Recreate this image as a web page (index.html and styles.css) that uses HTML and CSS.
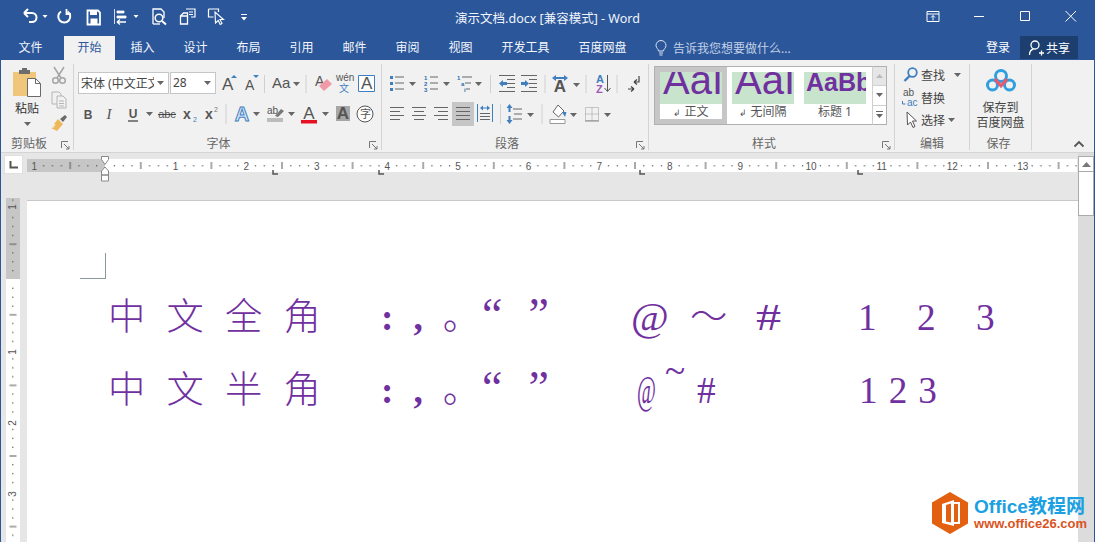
FILE: index.html
```html
<!DOCTYPE html>
<html lang="zh-CN">
<head>
<meta charset="utf-8">
<title>演示文档.docx [兼容模式] - Word</title>
<link rel="stylesheet" href="styles.css">
</head>
<body>
<div class="app">
  <header class="titlebar">
    <div class="qat">
      <svg width="18" height="24" viewBox="0 0 18 24"><path d="M3 9l4-4M3 9l4 4M3 9h8a4.5 4.5 0 0 1 0 9H8" fill="none" stroke="#fff" stroke-width="2"/></svg>
      <svg width="12" height="24" viewBox="0 0 12 24"><path d="M3.5 11h5L6 14z" fill="#fff"/></svg>
      <svg width="25" height="24" viewBox="0 0 25 24"><path d="M10 7.5a6 6 0 1 0 6.5 0" fill="none" stroke="#fff" stroke-width="2"/><path d="M15.5 5v5h4.5" fill="none" stroke="#fff" stroke-width="1.8"/></svg>
      <svg width="32" height="24" viewBox="0 0 32 24"><path d="M11.5 6.5h10.500l2 2v12h-12.500z" fill="none" stroke="#fff" stroke-width="1.800"/><path d="M14 7v4h7V7z" fill="#fff"/><path d="M14.500 20v-5.500h7V20z" fill="#fff"/></svg>
      <svg width="22" height="24" viewBox="0 0 22 24"><path d="M6.500 5v15M9 7h7v2H9zM9 12h9v2H9z" fill="#fff" stroke="#fff" stroke-width=".8"/><path d="M9 18h9M9 18l3-2.500M9 18l3 2.500" fill="none" stroke="#fff" stroke-width="1.300"/></svg>
      <svg width="12" height="24" viewBox="0 0 12 24"><path d="M3.500 11h5L6 14z" fill="#fff"/></svg>
      <svg width="30" height="24" viewBox="0 0 30 24"><path d="M11 20V5h8l3 3v6" fill="none" stroke="#fff" stroke-width="1.300"/><path d="M11 20h7" stroke="#fff" stroke-width="1.300"/><circle cx="17" cy="14" r="3.800" fill="none" stroke="#fff" stroke-width="1.500"/><path d="M20 17l4 3.500" stroke="#fff" stroke-width="2"/></svg>
      <svg width="28" height="24" viewBox="0 0 28 24"><path d="M14 5h9v8h-4M17 8h4M17 10.500h4" fill="none" stroke="#fff" stroke-width="1.200"/><path d="M8.500 20v-8h7v8zM8.500 12l3-3h4v3" fill="none" stroke="#fff" stroke-width="1.300"/></svg>
      <svg width="32" height="24" viewBox="0 0 32 24"><path d="M8.500 5h10v3M8.500 5v8h5" fill="none" stroke="#fff" stroke-width="1.200"/><path d="M15 8l.5 11 2.700-2.500 2 4 1.800-1-2-4h3.500z" fill="#2b579a" stroke="#fff" stroke-width="1.100"/></svg>
      <svg width="24" height="24" viewBox="0 0 24 24"><path d="M9 10.500h6" stroke="#fff"/><path d="M9 13h6l-3 3.500z" fill="#fff"/></svg>
    </div>
    <div class="doc-title">演示文档.docx [兼容模式] - Word</div>
    <div class="winbtns">
      <svg width="46" height="32" viewBox="0 0 46 32"><path d="M17 11.500h12v10H17zM17 14h12" fill="none" stroke="#fff"/><path d="M23 20.500v-5M21 17.500l2-2 2 2" fill="none" stroke="#fff"/></svg>
      <svg width="46" height="32" viewBox="0 0 46 32"><path d="M18 16.500h10" stroke="#fff"/></svg>
      <svg width="46" height="32" viewBox="0 0 46 32"><path d="M18.500 11.500h9v9h-9z" fill="none" stroke="#fff"/></svg>
      <svg width="46" height="32" viewBox="0 0 46 32"><path d="M17.500 11l10.500 10.500M28 11L17.500 21.500" fill="none" stroke="#fff"/></svg>
    </div>
  </header>

  <nav class="tabs">
    <a class="tab tab-file">文件</a>
    <a class="tab tab-active">开始</a>
    <a class="tab">插入</a>
    <a class="tab">设计</a>
    <a class="tab">布局</a>
    <a class="tab">引用</a>
    <a class="tab">邮件</a>
    <a class="tab">审阅</a>
    <a class="tab">视图</a>
    <a class="tab tab-long">开发工具</a>
    <a class="tab tab-long">百度网盘</a>
    <div class="tellme">
      <svg width="12" height="16" viewBox="0 0 12 16"><path d="M3.500 11c0-2-2.500-3-2.500-5.500a5 5 0 0 1 10 0C11 8 8.500 9 8.500 11zM4 13h4M4.500 15h3" fill="none" stroke="#dbe4f2"/></svg>
      <span>告诉我您想要做什么...</span>
    </div>
    <a class="signin">登录</a>
    <a class="share">
      <svg width="17" height="17" viewBox="0 0 17 17"><circle cx="7" cy="6" r="4" fill="none" stroke="#fff" stroke-width="1.300"/><path d="M1.500 16c0-3.500 2-5.500 4-6M11 14h5M13.500 11.500v5" fill="none" stroke="#fff" stroke-width="1.300"/></svg>
      <span>共享</span>
    </a>
  </nav>

  <div class="ribbon">
    <section class="grp grp-clip">
      <div class="clip-body">
        <div class="paste">
          <svg width="28" height="30" viewBox="0 0 28 30"><path d="M0 5h23v24H0z" fill="#f0c77a"/><path d="M6 3h11v4H6z" fill="#6d6d6d"/><path d="M9 1h5v3H9z" fill="#6d6d6d"/><path d="M14.500 11.500h8l5 5v13h-13z" fill="#fff" stroke="#6a6a6a"/><path d="M22.500 11.500v5h5" fill="none" stroke="#6a6a6a"/></svg>
          <span class="paste-label">粘贴</span>
          <svg width="7" height="5" viewBox="0 0 7 5"><path d="M0 0h7L3.500 4z" fill="#666"/></svg>
        </div>
        <div class="clip-tools">
          <svg width="16" height="24" viewBox="0 0 16 24"><path d="M3 3l7 11M13 3L6 14" stroke="#a5a5a5" stroke-width="1.500"/><circle cx="4.500" cy="16.500" r="2.800" fill="none" stroke="#a5a5a5" stroke-width="1.500"/><circle cx="11.500" cy="16.500" r="2.800" fill="none" stroke="#a5a5a5" stroke-width="1.500"/></svg>
          <svg width="16" height="24" viewBox="0 0 16 24"><path d="M1 4h7l2 2v2M1 4v12h5" fill="none" stroke="#b5b5b5"/><path d="M6 8h6l3 3v9H6z" fill="none" stroke="#b5b5b5"/><path d="M8 13h5M8 15.500h5M8 18h5" stroke="#b5b5b5"/></svg>
          <svg width="16" height="24" viewBox="0 0 16 24"><path d="M9 7l5-4 2 2-4 5z" fill="#6a6a6a"/><path d="M7 7l5 5-6 7-6-3 4-1-2-1 3-1-2-1z" fill="#edb85c"/></svg>
        </div>
      </div>
      <footer class="grp-label">剪贴板<svg class="launch" width="9" height="9" viewBox="0 0 9 9"><path d="M.5 7V.5H7M3 3l5 5M8 5v3H5" fill="none" stroke="#777"/></svg></footer>
    </section>

    <section class="grp grp-font">
      <div class="rw">
        <div class="combo combo-font"><span class="combo-text">宋体 (中文正文)</span><svg width="7" height="4" viewBox="0 0 7 4"><path d="M0 0h7L3.500 4z" fill="#666"/></svg></div>
        <div class="combo combo-size"><span class="combo-text">28</span><svg width="7" height="4" viewBox="0 0 7 4"><path d="M0 0h7L3.500 4z" fill="#666"/></svg></div>
        <svg width="25" height="24" viewBox="0 0 25 24"><text x="6" y="19" class="ti tl">A</text><path d="M15 7h6l-3-3z" fill="#3f7fbf"/></svg>
        <svg width="20" height="24" viewBox="0 0 20 24"><text x="4" y="19" class="ti tm">A</text><path d="M12 4h6l-3 3z" fill="#3f7fbf"/></svg>
        <svg width="7" height="24" viewBox="0 0 7 24"><path d="M3.500 4v18" class="sp"/></svg>
        <svg width="34" height="24" viewBox="0 0 34 24"><text x="4" y="17" class="ti tl2">Aa</text><path d="M25 11h7l-3.500 4z" fill="#666"/></svg>
        <svg width="8" height="24" viewBox="0 0 8 24"><path d="M4 4v18" class="sp"/></svg>
        <svg width="23" height="24" viewBox="0 0 23 24"><text x="5" y="15" class="ti tm">A</text><path d="M9 15l8-7 5 5-8 7z" fill="#f09aa8"/></svg>
        <svg width="22" height="24" viewBox="0 0 22 24"><text x="3" y="10" class="ti tw">wén</text><text x="6" y="21" class="tb2">文</text></svg>
        <svg width="23" height="24" viewBox="0 0 23 24"><path d="M3.500 4.500h16v16h-16z" fill="#fff" stroke="#3f7fbf"/><text x="6" y="18" class="ti tl">A</text></svg>
      </div>
      <div class="rw">
        <svg width="20" height="24" viewBox="0 0 20 24"><text x="10" y="17" class="ti tc tbold">B</text></svg>
        <svg width="22" height="24" viewBox="0 0 22 24"><text x="11" y="17" class="ti tc titalic">I</text></svg>
        <svg width="35" height="24" viewBox="0 0 35 24"><text x="13" y="16" class="ti tc tbold">U</text><path d="M8 19h10" stroke="#444" stroke-width="1.300"/><path d="M26 10h7l-3.500 4z" fill="#666"/></svg>
        <svg width="24" height="24" viewBox="0 0 24 24"><text x="12" y="16" class="ti tc tsm">abc</text><path d="M3 12.500h18" stroke="#444"/></svg>
        <svg width="22" height="24" viewBox="0 0 22 24"><text x="4" y="17" class="ti tbold tm">x</text><text x="14" y="20" class="tb3">2</text></svg>
        <svg width="21" height="24" viewBox="0 0 21 24"><text x="4" y="17" class="ti tbold tm">x</text><text x="13" y="10" class="tb3 tgray">2</text></svg>
        <svg width="8" height="24" viewBox="0 0 8 24"><path d="M4 2v20" class="sp"/></svg>
        <svg width="32" height="24" viewBox="0 0 32 24"><text x="12" y="19" class="tc tblueA">A</text><path d="M23 10h7l-3.500 4z" fill="#666"/></svg>
        <svg width="34" height="24" viewBox="0 0 34 24"><text x="5" y="12" class="ti tw2">ab</text><path d="M13 14l6-7 3 2-6 6z" fill="#777"/><path d="M5 16h16v4H5z" fill="#bcbcbc"/><path d="M26 10h7l-3.500 4z" fill="#666"/></svg>
        <svg width="34" height="24" viewBox="0 0 34 24"><text x="13" y="17" class="ti tc tl">A</text><path d="M5 18h16v3.500H5z" fill="#e81123"/><path d="M26 10h7l-3.500 4z" fill="#666"/></svg>
        <svg width="23" height="24" viewBox="0 0 23 24"><path d="M6 4h14v15H6z" fill="#a6a6a6"/><text x="13" y="17" class="ti tc tl tbold">A</text></svg>
        <svg width="25" height="24" viewBox="0 0 25 24"><circle cx="12" cy="12" r="8" fill="#fff" stroke="#555"/><text x="12" y="16" class="ti tc tsm">字</text></svg>
      </div>
      <footer class="grp-label">字体<svg class="launch" width="9" height="9" viewBox="0 0 9 9"><path d="M.5 7V.5H7M3 3l5 5M8 5v3H5" fill="none" stroke="#777"/></svg></footer>
    </section>

    <section class="grp grp-para">
      <div class="rw">
        <svg width="34" height="24" viewBox="0 0 34 24"><path d="M9 6h9M9 12h9M9 18h9" class="ln"/><path d="M4 5h3v3H4zM4 11h3v3H4zM4 17h3v3H4z" fill="#3f7fbf"/><path d="M23 11h7l-3.500 4z" fill="#666"/></svg>
        <svg width="32" height="24" viewBox="0 0 32 24"><path d="M10 6h8M10 12h8M10 18h8" class="ln"/><text x="4" y="9" class="tnum">1</text><text x="4" y="15" class="tnum">2</text><text x="4" y="21" class="tnum">3</text><path d="M23 11h7l-3.500 4z" fill="#666"/></svg>
        <svg width="34" height="24" viewBox="0 0 34 24"><path d="M10 6h10M13 12h6M14 18h4" class="ln"/><text x="5" y="9" class="tnum">1</text><text x="9" y="15" class="tnum">a</text><text x="12" y="21" class="tnum">i</text><path d="M23 11h7l-3.500 4z" fill="#666"/></svg>
        <svg width="9" height="24" viewBox="0 0 9 24"><path d="M4.500 4v18" class="sp"/></svg>
        <svg width="23" height="24" viewBox="0 0 23 24"><path d="M4 4.500h16M12 8.500h8M12 12.500h8M12 16.500h8M4 20.500h16" class="ln"/><path d="M4 12.500l4-3.500v2h4v3H8v2z" fill="#3f7fbf"/></svg>
        <svg width="23" height="24" viewBox="0 0 23 24"><path d="M3 4.500h16M11 8.500h8M11 12.500h8M11 16.500h8M3 20.500h16" class="ln"/><path d="M11 12.500l-4-3.500v2H3v3h4v2z" fill="#3f7fbf"/></svg>
        <svg width="8" height="24" viewBox="0 0 8 24"><path d="M4 4v18" class="sp"/></svg>
        <svg width="33" height="24" viewBox="0 0 33 24"><text x="11" y="21" class="ti tc tl tbold">A</text><path d="M3 7l4-3v2h8V4l4 3-4 3V8H7v2z" fill="#3f7fbf"/><path d="M24 12h7l-3.500 4z" fill="#666"/></svg>
        <svg width="8" height="24" viewBox="0 0 8 24"><path d="M4 4v18" class="sp"/></svg>
        <svg width="23" height="24" viewBox="0 0 23 24"><text x="6" y="12" class="tnum2 tazb">A</text><text x="6" y="22" class="tnum2 tazp">Z</text><path d="M17.500 4v16M14.500 17l3 3.500 3-3.500" fill="none" stroke="#555"/></svg>
        <svg width="8" height="24" viewBox="0 0 8 24"><path d="M4 4v18" class="sp"/></svg>
        <svg width="24" height="24" viewBox="0 0 24 24"><path d="M13 11h5V5M13 11l3-2.500M13 11l3 2.500M7 18h6M13 18l-3-2.500M13 18l-3 2.500" fill="none" stroke="#444" stroke-width="1.200"/></svg>
      </div>
      <div class="rw">
        <svg width="22" height="24" viewBox="0 0 22 24"><path d="M4 5.500h14M4 9.500h10M4 13.500h14M4 17.500h10" class="ln"/></svg>
        <svg width="22" height="24" viewBox="0 0 22 24"><path d="M4 5.500h14M6 9.500h10M4 13.500h14M6 17.500h10" class="ln"/></svg>
        <svg width="22" height="24" viewBox="0 0 22 24"><path d="M4 5.500h14M8 9.500h10M4 13.500h14M8 17.500h10" class="ln"/></svg>
        <svg class="btn-on" width="22" height="24" viewBox="0 0 22 24"><path d="M4 5.500h14M4 9.500h14M4 13.500h14M4 17.500h14" class="ln"/></svg>
        <svg width="23" height="24" viewBox="0 0 23 24"><path d="M3.500 2v18M18.500 2v18" stroke="#3f7fbf"/><path d="M6 11.500h10M6 14.500h10M6 17.500h10" class="ln"/><path d="M6 6l3-2.500v2h4v-2L16 6l-3 2.500v-2H9v2z" fill="#3f7fbf"/></svg>
        <svg width="7" height="24" viewBox="0 0 7 24"><path d="M3.500 2v20" class="sp"/></svg>
        <svg width="34" height="24" viewBox="0 0 34 24"><path d="M9 7h9M10 12h8M9 17h9" class="ln"/><path d="M5.500 2l3 4h-2v4h-2V6h-2zM5.500 22l3-4h-2v-4h-2v4h-2z" fill="#3f7fbf"/><path d="M23 11h7l-3.500 4z" fill="#666"/></svg>
        <svg width="8" height="24" viewBox="0 0 8 24"><path d="M4 2v20" class="sp"/></svg>
        <svg width="34" height="24" viewBox="0 0 34 24"><path d="M4 17.500h15v4H4z" fill="#fff" stroke="#999"/><path d="M12 3l6 6-5.500 6-5.500-5z" fill="#fff" stroke="#666"/><path d="M16 10h4.500l-1.500 5z" fill="#3f7fbf"/><path d="M24 11h7l-3.500 4z" fill="#666"/></svg>
        <svg width="34" height="24" viewBox="0 0 34 24"><path d="M5.500 5.500h13v13h-13zM12 5.500v13M5.500 12h13" fill="none" stroke="#999" stroke-dasharray="1 1"/><path d="M5 19h14" stroke="#888"/><path d="M24 11h7l-3.500 4z" fill="#666"/></svg>
      </div>
      <footer class="grp-label">段落<svg class="launch" width="9" height="9" viewBox="0 0 9 9"><path d="M.5 7V.5H7M3 3l5 5M8 5v3H5" fill="none" stroke="#777"/></svg></footer>
    </section>

    <section class="grp grp-style">
      <div class="gallery-wrap">
        <div class="gallery">
          <div class="style-item style-on"><div class="swatch"><span class="sample">AaI</span></div><div class="style-name"><small>↲</small> 正文</div></div>
          <div class="style-item"><div class="swatch"><span class="sample">AaI</span></div><div class="style-name"><small>↲</small> 无间隔</div></div>
          <div class="style-item"><div class="swatch"><span class="sample sample-b">AaBb</span></div><div class="style-name">标题 1</div></div>
        </div>
        <div class="gallery-scroll">
          <div class="gs gs-off"><svg width="7" height="4" viewBox="0 0 7 4"><path d="M0 4h7L3.500 0z" fill="#bbb"/></svg></div>
          <div class="gs"><svg width="7" height="4" viewBox="0 0 7 4"><path d="M0 0h7L3.500 4z" fill="#666"/></svg></div>
          <div class="gs"><svg width="7" height="7" viewBox="0 0 7 7"><path d="M0 .5h7" stroke="#666"/><path d="M0 3h7L3.500 7z" fill="#666"/></svg></div>
        </div>
      </div>
      <footer class="grp-label">样式<svg class="launch" width="9" height="9" viewBox="0 0 9 9"><path d="M.5 7V.5H7M3 3l5 5M8 5v3H5" fill="none" stroke="#777"/></svg></footer>
    </section>

    <section class="grp grp-edit">
      <div class="edit-body">
        <div class="edit-row"><svg width="20" height="20" viewBox="0 0 20 20"><circle cx="11.500" cy="7.500" r="4.300" fill="none" stroke="#3f7fbf" stroke-width="1.800"/><path d="M8.500 11l-5 5" stroke="#3f7fbf" stroke-width="2.400"/></svg><span>查找</span><svg class="edit-dd" width="7" height="4" viewBox="0 0 7 4"><path d="M0 0h7L3.500 4z" fill="#666"/></svg></div>
        <div class="edit-row"><svg width="20" height="20" viewBox="0 0 20 20"><text x="2" y="8" class="tw2">ab</text><text x="6" y="18" class="tw2 tblue">ac</text><path d="M1.500 13v3h3" fill="none" stroke="#3f7fbf"/></svg><span>替换</span></div>
        <div class="edit-row"><svg width="20" height="20" viewBox="0 0 20 20"><path d="M6 2l.5 13 3-3 2.500 5.500 2-1-2.500-5.500h4z" fill="#fff" stroke="#555"/></svg><span>选择</span><svg class="edit-dd2" width="7" height="4" viewBox="0 0 7 4"><path d="M0 0h7L3.500 4z" fill="#666"/></svg></div>
      </div>
      <footer class="grp-label">编辑</footer>
    </section>

    <section class="grp grp-save">
      <div class="save-body">
        <svg width="32" height="26" viewBox="0 0 32 26"><circle cx="16" cy="8" r="5.500" fill="none" stroke="#2f9fe0" stroke-width="3"/><circle cx="7.500" cy="17" r="5" fill="none" stroke="#2f9fe0" stroke-width="3"/><circle cx="24.500" cy="17" r="5" fill="none" stroke="#2f9fe0" stroke-width="3"/><path d="M10 11l6 7 6-7" fill="none" stroke="#f0566a" stroke-width="3"/></svg>
        <span class="save-text">保存到<br>百度网盘</span>
      </div>
      <footer class="grp-label">保存</footer>
    </section>

    <div class="collapse"><svg width="12" height="8" viewBox="0 0 12 8"><path d="M1.500 6.500L6 2l4.500 4.500" fill="none" stroke="#555" stroke-width="1.800"/></svg></div>
  </div>

  <div class="work">
    <div class="docarea">
      <div class="band">
        <div class="tabsel"><svg width="9" height="8" viewBox="0 0 9 8"><path d="M1.500 0v6.500H9" fill="none" stroke="#555" stroke-width="2"/></svg></div>
        <svg class="hruler" width="1050" height="30" viewBox="0 0 1050 30">
          <defs>
            <pattern id="hticks" patternUnits="userSpaceOnUse" x="78" y="3" width="70.6" height="13">
              <path d="M8.800 6h1v1.500h-1zM17.600 6h1v1.500h-1zM26.500 6h1v1.500h-1zM44.100 6h1v1.500h-1zM53 6h1v1.500h-1zM61.800 6h1v1.500h-1z" fill="#555"/>
              <path d="M35.300 3h1v7h-1z" fill="#555"/>
            </pattern>
          </defs>
          <rect x="0" y="3" width="78" height="13" fill="#c6c6c6"/>
          <rect x="78" y="3" width="972" height="13" fill="#fff"/>
          <rect x="0" y="3" width="1050" height="13" fill="url(#hticks)"/>
          <text class="rn" x="7.400" y="14">1</text><text class="rn" x="148.600" y="14">1</text><text class="rn" x="219.200" y="14">2</text><text class="rn" x="289.800" y="14">3</text><text class="rn" x="360.400" y="14">4</text><text class="rn" x="431" y="14">5</text><text class="rn" x="501.600" y="14">6</text><text class="rn" x="572.200" y="14">7</text><text class="rn" x="642.800" y="14">8</text><text class="rn" x="713.400" y="14">9</text><text class="rn" x="784" y="14">10</text><text class="rn" x="854.600" y="14">11</text><text class="rn" x="925.200" y="14">12</text><text class="rn" x="995.800" y="14">13</text>
          <path d="M246 14v4h5M352 14v4h5M613 14v4h5M831 14v4h5" fill="none" stroke="#555" stroke-width="1.500"/>
          <path d="M74.500 .5h7v3l-3.500 5-3.500-5z" fill="#fff" stroke="#888"/>
          <path d="M78 11l-3.500 4v4h7v-4zM74.500 19h7v6h-7z" fill="#fff" stroke="#888"/>
        </svg>
      </div>
      <div class="pagewrap">
        <svg class="vruler" width="14" height="344" viewBox="0 0 14 344">
          <defs>
            <pattern id="vticks" patternUnits="userSpaceOnUse" x="0" y="10.400" width="14" height="70.600">
              <path d="M6 8.800h1.500v1H6zM6 17.600h1.500v1H6zM6 26.500h1.500v1H6zM6 44.100h1.500v1H6zM6 53h1.500v1H6zM6 61.800h1.500v1H6z" fill="#555"/>
              <path d="M3.500 35.300h7v1h-7z" fill="#555"/>
            </pattern>
          </defs>
          <rect width="14" height="81" fill="#c6c6c6"/>
          <rect y="81" width="14" height="263" fill="#fff"/>
          <rect width="14" height="344" fill="url(#vticks)"/>
          <text class="rn" transform="translate(10 9) rotate(-90)">1</text>
          <text class="rn" transform="translate(10 154) rotate(-90)">1</text>
          <text class="rn" transform="translate(10 225) rotate(-90)">2</text>
          <text class="rn" transform="translate(10 296) rotate(-90)">3</text>
        </svg>
        <main class="page">
          <div class="cropmark"></div>
          <p class="line line-first">
            <span class="seg seg-cjk">中文全角</span>
            <span class="seg seg-punct">:,<span class="cjk">。</span></span>
            <span class="seg seg-quote">“”</span>
            <span class="cell c-at1">@</span><span class="cell c-tl1 cjk">～</span><span class="cell c-hs1"><span class="hash-wide">#</span></span>
            <span class="seg seg-num1">123</span>
          </p>
          <p class="line">
            <span class="seg seg-cjk">中文半角</span>
            <span class="seg seg-punct">:,<span class="cjk">。</span></span>
            <span class="seg seg-quote">“”</span>
            <span class="cell c-at2"><span class="at-narrow">@</span></span><span class="cell c-tl2"><span class="tilde-high">~</span></span><span class="cell c-hs2">#</span>
            <span class="seg seg-num2">123</span>
          </p>
        </main>
      </div>
    </div>
    <div class="vscroll">
      <div class="vs-btn"><svg width="9" height="5" viewBox="0 0 9 5"><path d="M0 5h9L4.500 0z" fill="#777"/></svg></div>
      <div class="vs-thumb"></div>
    </div>
  </div>

  <aside class="watermark">
    <svg width="40" height="44" viewBox="0 0 40 44"><path d="M20 1l18 10.500v21L20 43 2 32.500v-21z" fill="#e2600f"/><path d="M12 13l12-4v26l-12-3z" fill="#fff"/><path d="M16 14l5-1.500v19l-5-1z" fill="#e2600f"/><path d="M24 12h5v20h-5" fill="none" stroke="#fff" stroke-width="2"/></svg>
    <div class="wm-text">
      <div class="wm-top">Office教程网</div>
      <div class="wm-url">www.office26.com</div>
    </div>
  </aside>
</div>
</body>
</html>
```

FILE: styles.css
```css
* { box-sizing: border-box; }
html, body { margin: 0; padding: 0; }
body { font-family: "Noto Sans", "Noto Sans CJK SC", sans-serif; font-size: 12px; color: #444; }
svg { display: block; flex: none; }

.app {
  position: relative;
  width: 1095px;
  height: 542px;
  overflow: hidden;
  display: flex;
  flex-direction: column;
  background: #2b579a;
  border-left: 1px solid #2b579a;
  border-right: 1px solid #2b579a;
}

/* title bar */
.titlebar {
  height: 36px;
  flex: none;
  display: grid;
  grid-template-columns: 1fr auto 1fr;
  color: #fff;
}
.qat { display: flex; padding: 4px 0 0 20px; }
.doc-title { font-size: 12.500px; line-height: 37px; color: #f0f4fa; }
.winbtns { display: flex; justify-content: flex-end; }

/* tabs */
.tabs { height: 24px; flex: none; display: flex; align-items: stretch; color: #fff; }
.tab { width: 53px; text-align: center; line-height: 24px; font-size: 12px; color: #f4f6fb; }
.tab-file { width: 59px; margin-right: 4px; }
.tab-active { width: 51px; background: #f1f1f1; color: #2b579a; margin-right: 1px; }
.tab-long { width: 77px; }
.tellme { display: flex; align-items: center; gap: 6px; margin-left: 14px; color: #c3d0e6; font-size: 12px; }
.signin { margin-left: auto; margin-right: 10px; line-height: 24px; font-size: 12px; color: #fff; }
.share {
  width: 58px;
  margin-right: 16px;
  margin-bottom: 1px;
  padding-left: 8px;
  display: flex;
  align-items: center;
  gap: 1px;
  background: #1c3f70;
  color: #fff;
  font-size: 12px;
}

/* ribbon */
.ribbon {
  height: 93px;
  flex: none;
  display: flex;
  padding-top: 4px;
  background: #f1f1f1;
  border-bottom: 1px solid #d4d4d4;
}
.grp {
  height: 86px;
  position: relative;
  display: flex;
  flex-direction: column;
  border-right: 1px solid #d4d4d4;
  flex: none;
}
.grp-clip { width: 73px; padding-left: 2px; }
.grp-font { width: 308px; padding: 3px 0 0 4px; }
.grp-para { width: 267px; padding: 3px 0 0 4px; }
.grp-style { width: 246px; padding: 2px 0 0 5px; }
.grp-edit { width: 75px; padding-left: 6px; }
.grp-save { width: 62px; }

.rw { height: 31px; display: flex; align-items: center; flex: none; }
.grp-label {
  position: relative;
  margin-top: auto;
  height: 12px;
  line-height: 12px;
  font-size: 12px;
  text-align: center;
  color: #666;
  margin-left: -4px;
}
.grp-clip .grp-label { margin-left: -6px; padding-right: 12px; }
.grp-edit .grp-label { margin-left: -6px; }
.grp-font .grp-label { padding-right: 18px; }
.grp-para .grp-label { padding-right: 16px; }
.grp-style .grp-label { padding-right: 16px; }
.launch { position: absolute; right: 3px; top: 3px; }

.sp { stroke: #d0d0d0; fill: none; }
.ln { stroke: #666; fill: none; }

/* clipboard */
.clip-body { display: flex; }
.paste { width: 48px; display: flex; flex-direction: column; align-items: center; padding-top: 3px; }
.paste-label { font-size: 12px; line-height: 18px; margin-top: 3px; color: #333; }
.paste svg:last-child { margin-top: 4px; }
.clip-tools { display: flex; flex-direction: column; margin-top: 0; }

/* combos */
.combo {
  height: 22px;
  display: flex;
  align-items: center;
  background: #fff;
  border: 1px solid #c6c6c6;
  padding: 0 4px 0 2px;
  justify-content: space-between;
  flex: none;
}
.combo-font { width: 91px; }
.combo-size { width: 46px; margin-left: 1px; }
.combo-text { font-size: 12px; white-space: nowrap; overflow: hidden; width: 73px; }
.combo-size .combo-text { width: 26px; }

/* svg text */
.ti { font-family: "Liberation Sans", sans-serif; fill: #555; }
.tc { text-anchor: middle; }
.tl { font-size: 17px; }
.tm { font-size: 14px; }
.tl2 { font-size: 15px; }
.tsm { font-size: 11px; }
.tw { font-size: 10px; }
.tw2 { font-family: "Liberation Sans", sans-serif; font-size: 10px; fill: #555; }
.tb2 { font-size: 10px; fill: #3f7fbf; }
.tb3 { font-family: "Liberation Sans", sans-serif; font-size: 7px; fill: #3f7fbf; }
.tgray { fill: #777; }
.tblue { fill: #3f7fbf; }
.tbold { font-weight: 700; }
.titalic { font-style: italic; font-family: "Liberation Serif", serif; font-size: 15px; }
.tblueA { font-family: "Liberation Sans", sans-serif; font-size: 20px; font-weight: 700; fill: #dcebf8; stroke: #3f7fbf; stroke-width: 1; }
.tnum { font-family: "Liberation Sans", sans-serif; font-size: 6px; fill: #2b6cb0; font-weight: 700; }
.tnum2 { font-family: "Liberation Sans", sans-serif; font-size: 11px; font-weight: 700; }
.tazb { fill: #3f7fbf; }
.tazp { fill: #9b59b6; }
.btn-on { background: #c6c6c6; height: 24px; }

/* style gallery */
.gallery-wrap { display: flex; height: 59px; flex: none; }
.gallery { width: 218px; display: flex; background: #fff; border: 1px solid #b0b0b0; border-right: none; }
.style-item { width: 72px; padding: 5px; }
.style-on { background: #c6c6c6; }
.swatch { height: 32px; background: #c9e4cc; overflow: hidden; position: relative; }
.sample {
  display: block;
  font-family: "Liberation Sans", sans-serif;
  color: #7030a0;
  font-size: 40px;
  line-height: 32px;
  margin-top: -8px;
  padding-left: 3px;
  white-space: nowrap;
}
.sample-b { font-size: 25px; font-weight: 700; margin-top: -6px; padding-left: 2px; }
.style-name { height: 15px; background: #fff; line-height: 16px; font-size: 12px; text-align: center; white-space: nowrap; overflow: hidden; color: #555; }
.style-name small { font-size: 9px; }
.gallery-scroll { width: 15px; display: flex; flex-direction: column; border: 1px solid #b0b0b0; border-left: 1px solid #d0d0d0; background: #fff; }
.gs { flex: 1; display: flex; align-items: center; justify-content: center; border-bottom: 1px solid #d0d0d0; }
.gs:last-child { border-bottom: none; }
.gs-off { background: #e6e6e6; }

/* editing */
.edit-body { height: 68px; display: flex; flex-direction: column; }
.edit-row { height: 22.500px; display: flex; align-items: center; font-size: 12px; }
.edit-dd { margin-left: 9px; }
.edit-dd2 { margin-left: 3px; }

/* save */
.save-body { display: flex; flex-direction: column; align-items: center; padding-top: 4px; }
.save-text { text-align: center; font-size: 12px; line-height: 15px; margin-top: 6px; }
.collapse { flex: 1; display: flex; justify-content: flex-end; align-items: flex-end; padding: 0 9px 4px 0; }

/* workspace */
.work { flex: 1; min-height: 0; display: flex; background: #e6e6e6; }
.docarea { flex: 1; min-width: 0; display: flex; flex-direction: column; }
.band { height: 47px; flex: none; display: flex; padding: 3px 0 0 4px; align-items: flex-start; }
.tabsel {
  width: 17px;
  height: 17px;
  background: #fff;
  box-shadow: 0 0 0 1px #e0e0e0;
  display: flex;
  align-items: center;
  justify-content: center;
  margin: 0 5px 0 0;
  flex: none;
}
.hruler { overflow: visible; }
.rn { font-family: "Liberation Sans", sans-serif; font-size: 10px; fill: #555; text-anchor: middle; }
.pagewrap { flex: 1; min-height: 0; display: flex; }
.vruler { margin: -2px 7px 0 5px; }
.page {
  flex: 1;
  background: #fff;
  border-top: 1px solid #c8c8c8;
  padding-top: 52px;
  color: #7030a0;
  font-family: "Liberation Serif", "Noto Sans CJK SC", serif;
  font-size: 37.300px;
}
.cropmark {
  width: 26px;
  height: 26px;
  margin-left: 53px;
  border-right: 1px solid #8a9a9a;
  border-bottom: 1px solid #8a9a9a;
}

/* document lines */
.line { margin: 0; height: 73px; line-height: 73px; display: flex; align-items: baseline; padding-left: 81px; white-space: nowrap; }
.line-first { margin-top: -1px; }
.seg { display: block; flex: none; }
.cjk { font-family: "Noto Sans CJK SC", sans-serif; font-weight: 300; }
.seg-cjk { width: 273px; font-family: "Noto Sans CJK SC", sans-serif; font-weight: 300; letter-spacing: 21.200px; }
.seg-punct { width: 101px; letter-spacing: 20px; font-weight: 700; }
.seg-punct .cjk { letter-spacing: 0; }
.seg-quote { width: 149px; font-size: 46px; letter-spacing: 26px; }
.cell { display: block; flex: none; }
.c-at1 { width: 59px; font-size: 41px; }
.c-tl1 { width: 66px; }
.c-hs1 { width: 102px; }
.hash-wide { display: inline-block; transform: scaleX(1.350); transform-origin: left; }
.seg-num1 { letter-spacing: 40.400px; }
.c-at2 { width: 34px; padding-left: 6px; font-size: 41px; }
.at-narrow { display: inline-block; transform: scaleX(.5); transform-origin: left; }
.c-tl2 { width: 32px; }
.tilde-high { display: inline-block; transform: translateY(-20px); }
.c-hs2 { width: 162px; }
.seg-num2 { letter-spacing: 11px; }

/* scrollbar */
.vscroll { width: 16px; flex: none; padding-top: 3px; background: #dcdcdc; }
.vs-btn { height: 16px; background: #fff; border: 1px solid #ababab; display: flex; align-items: center; justify-content: center; }
.vs-thumb { height: 44px; background: #fff; border: 1px solid #ababab; border-top: none; }

/* watermark */
.watermark { position: absolute; right: 7px; bottom: 7px; display: flex; align-items: center; gap: 4px; }
.wm-top { font-family: "Liberation Sans", "Noto Sans CJK SC", sans-serif; font-weight: 700; font-size: 19px; line-height: 21px; color: #1ba1e2; }
.wm-url { font-family: "Liberation Sans", sans-serif; font-weight: 700; font-size: 13px; line-height: 14px; color: #d9541e; }
```
